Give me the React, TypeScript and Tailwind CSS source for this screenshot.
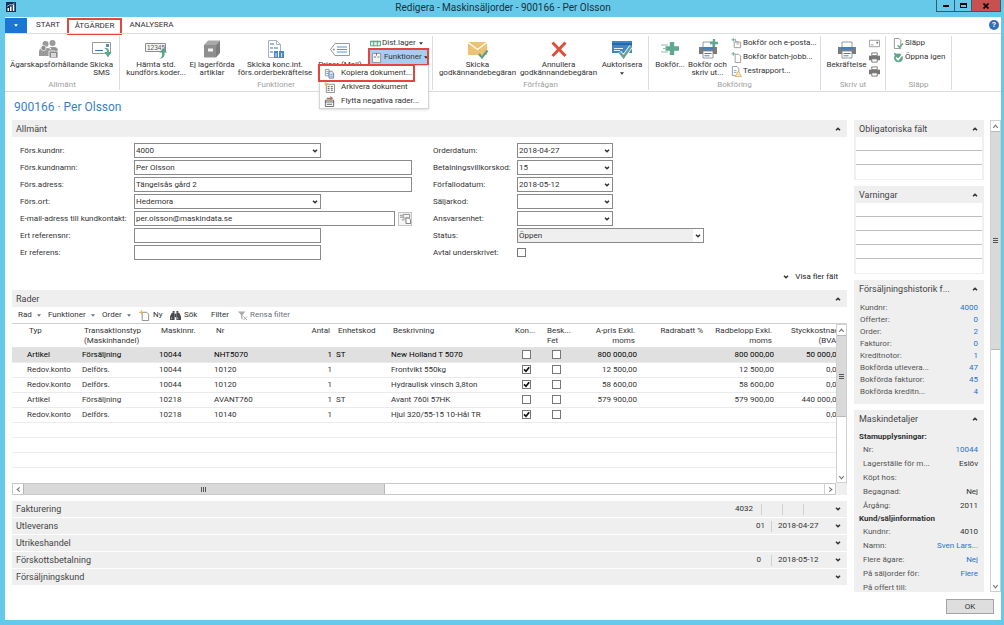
import type { ReactNode } from 'react'

const generalLeft = [
  { id: 'kundnr', label: 'Förs.kundnr:', value: '4000', kind: 'select' },
  { id: 'kundnamn', label: 'Förs.kundnamn:', value: 'Per Olsson', kind: 'wide' },
  { id: 'adress', label: 'Förs.adress:', value: 'Tängelsås gård 2', kind: 'wide' },
  { id: 'ort', label: 'Förs.ort:', value: 'Hedemora', kind: 'select' },
  { id: 'email', label: 'E-mail-adress till kundkontakt:', value: 'per.olsson@maskindata.se', kind: 'email' },
  { id: 'ertref', label: 'Ert referensnr:', value: '', kind: 'text' },
  { id: 'erref', label: 'Er referens:', value: '', kind: 'text' },
]

const generalRight = [
  { id: 'orderdatum', label: 'Orderdatum:', value: '2018-04-27' },
  { id: 'villkor', label: 'Betalningsvillkorskod:', value: '15' },
  { id: 'forfallo', label: 'Förfallodatum:', value: '2018-05-12' },
  { id: 'saljarkod', label: 'Säljarkod:', value: '' },
  { id: 'ansvar', label: 'Ansvarsenhet:', value: '' },
]

const lines = [
  { typ: 'Artikel', trans: 'Försäljning', maskin: '10044', nr: 'NHT5070', enhet: 'ST', text: 'New Holland T 5070', kon: false, pris: '800 000,00', cost: '50 000,00' },
  { typ: 'Redov.konto', trans: 'Delförs.', maskin: '10044', nr: '10120', enhet: '', text: 'Frontvikt 550kg', kon: true, pris: '12 500,00', cost: '0,00' },
  { typ: 'Redov.konto', trans: 'Delförs.', maskin: '10044', nr: '10120', enhet: '', text: 'Hydraulisk vinsch 3,8ton', kon: true, pris: '58 600,00', cost: '0,00' },
  { typ: 'Artikel', trans: 'Försäljning', maskin: '10218', nr: 'AVANT760', enhet: 'ST', text: 'Avant 760i 57HK', kon: false, pris: '579 900,00', cost: '440 000,00' },
  { typ: 'Redov.konto', trans: 'Delförs.', maskin: '10218', nr: '10140', enhet: '', text: 'Hjul 320/55-15 10-Hål TR', kon: true, pris: '', cost: '0,00' },
]

const history = [
  ['Kundnr:', '4000'],
  ['Offerter:', '0'],
  ['Order:', '2'],
  ['Fakturor:', '0'],
  ['Kreditnotor:', '1'],
  ['Bokförda utlevera...', '47'],
  ['Bokförda fakturor:', '45'],
  ['Bokförda kreditn...', '4'],
]

const masterData = [
  { label: 'Nr:', value: '10044', link: true },
  { label: 'Lagerställe för m...', value: 'Eslöv', link: false },
  { label: 'Köpt hos:', value: '', link: false },
  { label: 'Begagnad:', value: 'Nej', link: false },
  { label: 'Årgång:', value: '2011', link: false },
]

const customerData = [
  { label: 'Kundnr:', value: '4010', link: false },
  { label: 'Namn:', value: 'Sven Lars...', link: true },
  { label: 'Flere ägare:', value: 'Nej', link: true },
  { label: 'På säljorder för:', value: 'Flere', link: true },
  { label: 'På offert till:', value: '', link: false },
]

/* ---------- icons ---------- */

function Chevron({ up = false, className = '' }: { up?: boolean; className?: string }) {
  return (
    <svg viewBox="0 0 8 6" className={`h-[6px] w-[8px] shrink-0 ${className}`} fill="none" stroke="#333" strokeWidth="1.5">
      <path d={up ? 'M2 4.300 4 2.300l2 2' : 'M2 1.700 4 3.700l2-2'} />
    </svg>
  )
}

function Caret({ className = '' }: { className?: string }) {
  return (
    <svg viewBox="0 0 6 4" className={`h-[3px] w-[4px] shrink-0 ${className}`} fill="currentColor">
      <path d="M0 0h6L3 4z" />
    </svg>
  )
}

function Big({ children }: { children: ReactNode }) {
  return <svg viewBox="0 0 22 20" className="h-5 w-[22px] shrink-0" fill="none">{children}</svg>
}

function Small({ children }: { children: ReactNode }) {
  return <svg viewBox="0 0 12 12" className="h-[11px] w-[11px] shrink-0" fill="none">{children}</svg>
}

const PeopleIcon = () => (
  <Big>
    <g fill="#9a9a9a">
      <circle cx="7.500" cy="5" r="3" />
      <circle cx="14.500" cy="4" r="3" />
      <path d="M1 17v-4q0-4 4-4h5q3 0 3 4v4z" />
      <path d="M11 8h5q4 0 4 4v3h-6v-3q0-3-3-4z" />
    </g>
    <circle cx="5.500" cy="9" r="2.600" fill="#8b8b8b" stroke="#fff" strokeWidth=".7" />
    <path d="M11 12h9v7h-9z" fill="#8b8b8b" stroke="#fff" strokeWidth=".8" />
    <path d="M13 12v-2h5v2" stroke="#8b8b8b" />
    <path d="M13 14h5v4h-5z" fill="#d7d7d7" />
  </Big>
)

const SmsIcon = () => (
  <Big>
    <path d="M1.500 3.500h18v11h-18z" fill="#fff" stroke="#9b9b9b" />
    <path d="M4 11.500h8" stroke="#3c78b8" />
    <path d="M15 5h3v3h-3z" fill="#5b87b5" />
    <path d="M13 9q5-1 5 4h2.500L17 18.500 13.500 13H16q0-3-3-4z" fill="#5fa58c" />
  </Big>
)

const CodesIcon = () => (
  <Big>
    <path d="M.5 4.500h20v8H.5z" fill="#f4f4f4" stroke="#8d8d8d" />
    <text x="2" y="11" fontSize="6.500" fill="#555" fontFamily="Liberation Sans, sans-serif">12345</text>
    <path d="M14 19.500q4-1 3-6h-2.500L18.500 9l3.500 4.500h-2.500q1 6-5.500 6z" fill="#56a184" />
  </Big>
)

const BoxIcon = () => (
  <Big>
    <path d="M3 6 7 1.500h12L15 6z" fill="#a8a8a8" />
    <path d="M15 6l4-4.500V14l-4 4.500z" fill="#7d7d7d" />
    <path d="M3 6h12v12.500H3z" fill="#8e8e8e" />
    <path d="M7 9.500h5v3H7z" fill="#f2f2f2" />
  </Big>
)

const ConfirmIcon = () => (
  <Big>
    <path d="M4.500 1.500h8l4 4v13h-12z" fill="#fff" stroke="#a5b3c0" />
    <path d="M12.500 1.500v4h4" stroke="#a5b3c0" />
    <path d="M6 4h4v2H6zM6 8h3v2H6zM10 8h4v2h-4zM6 12h3v2H6z" fill="#9db9d6" />
    <path d="M10 12h4v7h-4zM15 12h5v7h-5z" fill="#4b8ac0" />
    <path d="M12 14v4M17.500 14v4" stroke="#cfe1f2" />
  </Big>
)

const TagIcon = () => (
  <Big>
    <path d="M6 4.500h14.500v12H6l-4.500-6z" fill="#fff" stroke="#9a9a9a" />
    <path d="M8 8h10M8 10.500h10M8 13h10" stroke="#5d93c7" />
    <circle cx="4.800" cy="10.500" r="1" fill="#9a9a9a" />
  </Big>
)

const MailCheckIcon = () => (
  <Big>
    <path d="M1 3h19v13H1z" fill="#ecc374" />
    <path d="m1 3.500 9.500 7 9.500-7" stroke="#fff" strokeWidth="1.200" />
    <path d="m12 15 3 3.500 5.500-7" stroke="#5f9f86" strokeWidth="2.200" />
  </Big>
)

const CrossIcon = () => (
  <Big>
    <path d="M4.500 3.500 17.500 17M17.500 3.500 4.500 17" stroke="#e04b35" strokeWidth="2.800" />
  </Big>
)

const AuthorizeIcon = () => (
  <Big>
    <path d="M1 2h20v12H1z" fill="#3f86c6" />
    <path d="M1 5h20" stroke="#235e96" strokeWidth="1.500" />
    <path d="M3 9.500h9M3 11.500h6" stroke="#e4effa" />
    <path d="m8.500 13 4 5L20 7.500" stroke="#fff" strokeWidth="4" />
    <path d="m8.500 13 4 5L20 7.500" stroke="#6aa393" strokeWidth="2.600" />
  </Big>
)

const PostIcon = () => (
  <Big>
    <path d="M13 3v13M6.500 9.500h13.500" stroke="#5fa88d" strokeWidth="4.400" />
    <path d="M2 6h7M4 9.500h4M2 13h7" stroke="#8bbfac" />
  </Big>
)

function PrinterShape() {
  return (
    <>
      <path d="M6 3h10v6H6z" fill="#fff" stroke="#808080" strokeWidth=".8" />
      <path d="M2 8h18v7H2z" fill="#7b7b7b" />
      <path d="M5 8h12v2H5z" fill="#3d83c3" />
      <path d="M6 12h10v7H6z" fill="#fff" stroke="#808080" strokeWidth=".8" />
      <path d="M7.500 14.500h7M7.500 16.800h5" stroke="#3d83c3" />
    </>
  )
}

const PrintPostIcon = () => (
  <Big>
    <PrinterShape />
    <path d="M17 0v8M13 4h8" stroke="#5fa88d" strokeWidth="2.400" />
  </Big>
)

const PrinterIcon = () => <Big><PrinterShape /></Big>

const SmallPrinter = () => (
  <Small>
    <path d="M3 1h6v3H3z" fill="#fff" stroke="#777" />
    <path d="M0 4h12v5H0z" fill="#777" />
    <path d="M3 7.500h6v3.500H3z" fill="#fff" stroke="#777" />
  </Small>
)

const SmallMail = () => (
  <Small>
    <path d="M.5 2.500h11v7H.5z" fill="#fff" stroke="#9a9a9a" />
    <path d="M2 7.500h3" stroke="#999" />
    <path d="M8 4h2v2H8z" fill="#777" />
  </Small>
)

const MoneyIcon = () => (
  <Small>
    <path d="M.5 3.500h11v5H.5z" fill="#e2f1ea" stroke="#5c9f88" />
    <path d="M0 4h12M4 3v6M8 3v6" stroke="#5c9f88" />
  </Small>
)

const FormIcon = () => (
  <Small>
    <path d="M1.500 1.500h9v10h-9z" fill="#f5f5f5" stroke="#8c8c8c" />
    <path d="M6 1v3M3 5.500h2.500M7 5.500h2" stroke="#6b6b6b" />
  </Small>
)

const CopyIcon = () => (
  <Small>
    <path d="M1.500 1.500h4v7h-4z" fill="#fff" stroke="#8495a8" />
    <path d="M5.500 3.500h3l2 2v5.500h-5z" fill="#dfeaf6" stroke="#5b82ad" />
    <path d="M2.500 4h2M2.500 6h2M7 7h2.500M7 9h2.500" stroke="#5b82ad" strokeWidth=".8" />
  </Small>
)

const ArchiveIcon = () => (
  <Small>
    <path d="M2.500 2.500h9v9h-9z" fill="#f8f8f8" stroke="#8b8b8b" />
    <path d="M4 5h2M7.500 5h2M4 7h2M7.500 7h2M4 9h2M7.500 9h2" stroke="#555" />
    <path d="M2 0v4M0 2h4" stroke="#e9b24c" />
  </Small>
)

const MoveIcon = () => (
  <Small>
    <path d="M1.500 4.500h9v7h-9z" fill="#fff" stroke="#666" />
    <path d="M1 6.500h10M3 9h6" stroke="#555" />
    <path d="M3 2h4V0l3 2.500L7 5V3.500H3z" fill="#b36a59" />
  </Small>
)

const PostMailIcon = () => (
  <Small>
    <path d="M3.500 4.500h7v6h-7z" fill="#fff" stroke="#999" />
    <path d="M2.500 0v4M.5 2h4" stroke="#5fa88d" />
    <path d="M6 6.500h3M5 1v3h3" stroke="#999" />
  </Small>
)

const PostBatchIcon = () => (
  <Small>
    <path d="M4.500 2.500h4l2 2v7h-6z" fill="#fff" stroke="#999" />
    <path d="M2.500 0v4M.5 2h4" stroke="#5fa88d" />
  </Small>
)

const ReportIcon = () => (
  <Small>
    <path d="M1.500.5h5l2 2v8h-7z" fill="#fff" stroke="#8f9aa5" />
    <path d="M3 5h3M3 7h3" stroke="#8aa9c6" />
    <path d="m8 5.500 3.500 6h-7z" fill="#fae6bf" stroke="#dba850" strokeWidth=".8" />
  </Small>
)

const ReleaseIcon = () => (
  <Small>
    <path d="M1.500.5h5l2 2v9h-7z" fill="#fff" stroke="#8f8f8f" />
    <path d="m5 8 2 2 4-4" stroke="#5fa58c" strokeWidth="1.500" />
  </Small>
)

const ReopenIcon = () => (
  <Small>
    <circle cx="6" cy="6.500" r="4.800" fill="#5fa58c" />
    <path d="m3.500 6 2 2.500L10 3" stroke="#fff" strokeWidth="1.500" />
    <path d="M1 1l3 .5L2 4z" fill="#5b87b5" />
  </Small>
)

const NewIcon = () => (
  <Small>
    <path d="M3.500 2.500h5l2 2v7h-7z" fill="#fff" stroke="#888" />
    <path d="M2.500 0v4.500M0 2.500h5" stroke="#e8a64a" />
  </Small>
)

const BinocularsIcon = () => (
  <Small>
    <path d="M2 3h3v8H0V7zM7 3h3l2 4v4H7z" fill="#4a4a4a" />
    <path d="M3 1h2v2H3zM7 1h2v2H7zM5 4h2v4H5z" fill="#4a4a4a" />
    <path d="M1.500 8v2M8.500 8v2" stroke="#bbb" />
  </Small>
)

const ClearFilterIcon = () => (
  <Small>
    <path d="M1 1.500h8L6 5.500v5L4.500 9V5.500z" fill="#aaa" />
    <path d="m7 7 4 4M11 7l-4 4" stroke="#aaa" />
  </Small>
)

/* ---------- ribbon ---------- */

function BigButton({ icon, lines, width, caret = false }: { icon: ReactNode; lines: string[]; width: string; caret?: boolean }) {
  return (
    <button className={`flex shrink-0 flex-col items-center pt-[3px] whitespace-nowrap ${width}`}>
      {icon}
      <span className="mt-[2px] flex flex-col items-center leading-[8px]">
        {lines.map((line) => <span key={line}>{line}</span>)}
      </span>
      {caret && <Caret className="mt-[3px]" />}
    </button>
  )
}

function SmallButton({ icon, label, caret = false }: { icon: ReactNode; label?: string; caret?: boolean }) {
  return (
    <button className="flex h-[14px] items-center gap-[1px] whitespace-nowrap" aria-label={label ?? 'Skriv ut'}>
      {icon}
      {label}
      {caret && <Caret className="ml-[2px]" />}
    </button>
  )
}

function RibbonGroup({ label, width, children }: { label: string; width: string; children: ReactNode }) {
  return (
    <div className={`mt-[2px] mb-[1px] flex shrink-0 flex-col border-r border-[#dcdcdc] ${width}`}>
      <div className="flex min-h-0 flex-1">{children}</div>
      <div className="h-[10px] text-center leading-[10px] text-[#a0a0a0]">{label}</div>
    </div>
  )
}

function FunctionsMenu() {
  const items = [
    { icon: <CopyIcon />, label: 'Kopiera dokument...', marked: true },
    { icon: <ArchiveIcon />, label: 'Arkivera dokument', marked: false },
    { icon: <MoveIcon />, label: 'Flytta negativa rader...', marked: false },
  ]
  return (
    <div className="absolute top-[15px] right-[-2px] z-10 w-[110px] border border-[#d5d5d5] bg-white shadow-sm">
      {items.map((item) => (
        <button
          key={item.label}
          className={`flex h-[14px] items-center gap-[6px] pl-[4px] whitespace-nowrap ${item.marked ? 'w-[93px] outline-2 outline-[#e2463f]' : 'w-full'}`}
        >
          {item.icon}
          {item.label}
        </button>
      ))}
    </div>
  )
}

function Ribbon() {
  return (
    <div className="flex h-[59px] shrink-0 border-y border-[#dcdcdc]">
      <RibbonGroup label="Allmänt" width="w-[115px]">
        <BigButton icon={<PeopleIcon />} lines={['Ägarskapsförhållande']} width="ml-[4px] w-[80px]" />
        <BigButton icon={<SmsIcon />} lines={['Skicka', 'SMS']} width="w-[25px]" />
      </RibbonGroup>
      <RibbonGroup label="Funktioner" width="w-[313px]">
        <BigButton icon={<CodesIcon />} lines={['Hämta std.', 'kundförs.koder...']} width="ml-[4px] w-[64px]" />
        <BigButton icon={<BoxIcon />} lines={['Ej lagerförda', 'artiklar']} width="w-[48px]" />
        <BigButton icon={<ConfirmIcon />} lines={['Skicka konc.int.', 'förs.orderbekräftelse']} width="w-[78px]" />
        <BigButton icon={<TagIcon />} lines={['Priser (Mail)']} width="w-[52px]" />
        <div className="ml-[4px]">
          <SmallButton icon={<MoneyIcon />} label="Dist.lager" caret />
          <div className="relative">
            <button className="flex h-[14px] w-[57px] items-center gap-[2px] bg-[#a9cdf0] px-[1px] whitespace-nowrap outline-2 outline-[#e2463f]">
              <FormIcon />
              Funktioner
              <Caret />
            </button>
            <FunctionsMenu />
          </div>
        </div>
      </RibbonGroup>
      <RibbonGroup label="Förfrågan" width="w-[216px]">
        <BigButton icon={<MailCheckIcon />} lines={['Skicka', 'godkännandebegäran']} width="ml-[4px] w-[81px]" />
        <BigButton icon={<CrossIcon />} lines={['Annullera', 'godkännandebegäran']} width="w-[81px]" />
        <BigButton icon={<AuthorizeIcon />} lines={['Auktorisera']} width="w-[46px]" caret />
      </RibbonGroup>
      <RibbonGroup label="Bokföring" width="w-[172px]">
        <BigButton icon={<PostIcon />} lines={['Bokför...']} width="ml-[4px] w-[34px]" />
        <BigButton icon={<PrintPostIcon />} lines={['Bokför och', 'skriv ut...']} width="w-[41px]" />
        <div className="ml-[3px]">
          <SmallButton icon={<PostMailIcon />} label="Bokför och e-posta..." />
          <SmallButton icon={<PostBatchIcon />} label="Bokför batch-jobb..." />
          <SmallButton icon={<ReportIcon />} label="Testrapport..." />
        </div>
      </RibbonGroup>
      <RibbonGroup label="Skriv ut" width="w-[65px]">
        <BigButton icon={<PrinterIcon />} lines={['Bekräftelse']} width="ml-[4px] w-[43px]" />
        <div className="ml-[1px]">
          <SmallButton icon={<SmallMail />} />
          <SmallButton icon={<SmallPrinter />} />
          <SmallButton icon={<SmallPrinter />} />
        </div>
      </RibbonGroup>
      <RibbonGroup label="Släpp" width="w-[66px]">
        <div className="ml-[7px]">
          <SmallButton icon={<ReleaseIcon />} label="Släpp" />
          <SmallButton icon={<ReopenIcon />} label="Öppna igen" />
        </div>
      </RibbonGroup>
    </div>
  )
}

/* ---------- form parts ---------- */

function SelectBox({ id, value, width, muted = false }: { id: string; value: string; width: string; muted?: boolean }) {
  return (
    <div className={`relative ${width}`}>
      <select id={id} defaultValue={value} className={`block h-[15px] w-full appearance-none border border-[#8a8a8a] pl-[1px] leading-[12px] ${muted ? 'bg-[#efefef]' : 'bg-white'}`}>
        <option>{value}</option>
      </select>
      <div className="pointer-events-none absolute inset-y-[1px] right-[1px] flex w-[10px] items-center justify-center bg-white">
        <Chevron />
      </div>
    </div>
  )
}

function SectionHeader({ title }: { title: string }) {
  return (
    <button className="flex h-[17px] w-full shrink-0 items-center justify-between bg-[#efefef] pr-[5px] pl-[4px] text-[9px] text-[#444]">
      {title}
      <Chevron up />
    </button>
  )
}

function Check({ id, label, checked = false }: { id?: string; label: string; checked?: boolean }) {
  return (
    <span className="relative block h-[9px] w-[9px]">
      <input id={id} type="checkbox" aria-label={label} defaultChecked={checked} className="peer block h-[9px] w-[9px] appearance-none border border-[#777] bg-white" />
      <svg viewBox="0 0 9 9" className="pointer-events-none absolute inset-0 hidden h-[9px] w-[9px] peer-checked:block" fill="none" stroke="#111" strokeWidth="1.700">
        <path d="m2 4.300 2 2 3.200-4" />
      </svg>
    </span>
  )
}

function GeneralSection() {
  const input = 'h-[15px] border border-[#8a8a8a] bg-white pl-[1px]'
  return (
    <section className="shrink-0">
      <SectionHeader title="Allmänt" />
      <div className="flex pt-[6px] pl-[8px]">
        <div className="flex w-[413px] flex-col gap-[2px]">
          {generalLeft.map((field) => (
            <div key={field.id} className="flex items-center">
              <label htmlFor={field.id} className="w-[114px] shrink-0 whitespace-nowrap">{field.label}</label>
              {field.kind === 'select' && <SelectBox id={field.id} value={field.value} width="w-[187px]" />}
              {field.kind === 'wide' && <input id={field.id} defaultValue={field.value} className={`w-[278px] ${input}`} />}
              {field.kind === 'text' && <input id={field.id} defaultValue={field.value} className={`w-[187px] ${input}`} />}
              {field.kind === 'email' && (
                <>
                  <input id={field.id} defaultValue={field.value} className={`w-[261px] ${input}`} />
                  <button aria-label="Skicka e-post" className="ml-[3px] flex h-[14px] w-[14px] items-center justify-center border border-[#c4c4c4] bg-[#f6f6f6]">
                    <Small>
                      <path d="M3.500 1.500h7v4h-7z" stroke="#888" />
                      <path d="M6.500 5.500h3l2 2v4h-5z" fill="#fff" stroke="#777" />
                      <path d="M0 2.500h3M0 4.500h3M2 7.500h3" stroke="#888" />
                    </Small>
                  </button>
                </>
              )}
            </div>
          ))}
        </div>
        <div className="flex flex-col gap-[2px]">
          {generalRight.map((field) => (
            <div key={field.id} className="flex items-center">
              <label htmlFor={field.id} className="w-[84px] whitespace-nowrap">{field.label}</label>
              <SelectBox id={field.id} value={field.value} width="w-[96px]" />
            </div>
          ))}
          <div className="flex items-center">
            <label htmlFor="status" className="w-[84px]">Status:</label>
            <SelectBox id="status" value="Öppen" width="w-[187px]" muted />
          </div>
          <div className="flex h-[15px] items-center">
            <label htmlFor="avtal" className="w-[84px] whitespace-nowrap">Avtal underskrivet:</label>
            <Check id="avtal" label="Avtal underskrivet" />
          </div>
        </div>
      </div>
      <div className="flex h-[30px] items-end justify-end pr-[9px] pb-[8px]">
        <button className="flex h-[10px] items-center gap-[5px] text-[#222]">
          <Chevron />
          Visa fler fält
        </button>
      </div>
    </section>
  )
}

/* ---------- order lines ---------- */

function LinesToolbar() {
  return (
    <div className="flex h-[16px] shrink-0 items-center pl-[6px] whitespace-nowrap">
      <button className="flex w-[30px] items-center gap-[5px]">Rad <Caret className="text-gray-500" /></button>
      <button className="flex w-[54px] items-center gap-[5px]">Funktioner <Caret className="text-gray-500" /></button>
      <button className="flex w-[37px] items-center gap-[5px]">Order <Caret className="text-gray-500" /></button>
      <button className="flex w-[31px] items-center gap-[3px]"><NewIcon /> Ny</button>
      <button className="flex w-[41px] items-center gap-[3px]"><BinocularsIcon /> Sök</button>
      <button className="w-[26px] text-left">Filter</button>
      <button className="flex items-center gap-[2px] text-gray-500"><ClearFilterIcon /> Rensa filter</button>
    </div>
  )
}

function ScrollButton({ path, className }: { path: string; className: string }) {
  return (
    <button aria-label="Rulla" className={`flex shrink-0 items-center justify-center bg-white ${className}`}>
      <svg viewBox="0 0 8 8" className="h-[7px] w-[7px]" fill="none" stroke="#777" strokeWidth="1.300"><path d={path} /></svg>
    </button>
  )
}

function VerticalScrollbar({ thumb }: { thumb: string }) {
  return (
    <div className="flex w-[11px] shrink-0 flex-col border border-[#d0d0d0] bg-white">
      <ScrollButton path="m1.500 5.500 2.500-3 2.500 3" className="h-[10px] w-full" />
      <div className={`flex flex-col items-center justify-center gap-[1px] border-y border-[#b8b8b8] bg-[#d9d9d9] ${thumb}`}>
        <span className="h-px w-[5px] bg-[#555]" />
        <span className="h-px w-[5px] bg-[#555]" />
        <span className="h-px w-[5px] bg-[#555]" />
      </div>
      <div className="flex-1" />
      <ScrollButton path="m1.500 2.500 2.500 3 2.500-3" className="h-[10px] w-full" />
    </div>
  )
}

function LinesTable() {
  const th = 'px-[4px] pt-[2px] align-top font-normal'
  return (
    <div className="shrink-0">
      <div className="flex border-t border-[#cfcfcf]">
        <div className="min-w-0 flex-1 overflow-hidden">
          <table className="w-[calc(100%+7px)] table-fixed border-collapse whitespace-nowrap">
            <colgroup>
              <col className="w-[13px]" />
              <col className="w-[55px]" />
              <col className="w-[77px]" />
              <col className="w-[55px]" />
              <col className="w-[68px]" />
              <col className="w-[54px]" />
              <col className="w-[55px]" />
              <col />
              <col className="w-[32px]" />
              <col className="w-[29px]" />
              <col className="w-[67px]" />
              <col className="w-[68px]" />
              <col className="w-[69px]" />
              <col className="w-[67px]" />
            </colgroup>
            <thead>
              <tr className="h-[23px] border-b border-[#e4e4e4] text-left leading-[10px]">
                <th />
                <th className={th}>Typ</th>
                <th className={th}>Transaktionstyp<br />(Maskinhandel)</th>
                <th className={th}>Maskinnr.</th>
                <th className={th}>Nr</th>
                <th className={`${th} text-right`}>Antal</th>
                <th className={th}>Enhetskod</th>
                <th className={th}>Beskrivning</th>
                <th className={th}>Kon...</th>
                <th className={th}>Besk...<br />Fet</th>
                <th className={`${th} text-right`}>A-pris Exkl.<br />moms</th>
                <th className={`${th} text-right`}>Radrabatt %</th>
                <th className={`${th} text-right`}>Radbelopp Exkl.<br />moms</th>
                <th className={`${th} text-right`}>Styckkostnad<br />(BVA)</th>
              </tr>
            </thead>
            <tbody>
              {lines.map((line, i) => (
                <tr key={i} className={`h-[15px] border-b border-[#ebebeb] ${i === 0 ? 'bg-[#e0e0e0] text-black' : ''}`}>
                  <td />
                  <td className="px-[2px]">{line.typ}</td>
                  <td className="px-[2px]">{line.trans}</td>
                  <td className="px-[2px]">{line.maskin}</td>
                  <td className="px-[2px]">{line.nr}</td>
                  <td className="px-[2px] text-right">1</td>
                  <td className="px-[2px]">{line.enhet}</td>
                  <td className="px-[2px]">{line.text}</td>
                  <td className="pl-[11px]"><Check label="Kontroll" checked={line.kon} /></td>
                  <td className="pl-[9px]"><Check label="Beskrivning fet" /></td>
                  <td className="px-[2px] text-right">{line.pris}</td>
                  <td />
                  <td className="px-[2px] text-right">{line.pris}</td>
                  <td className="px-[2px] text-right">{line.cost}</td>
                </tr>
              ))}
              {[0, 1, 2].map((i) => (
                <tr key={i} className="h-[15px] border-b border-[#ebebeb]"><td colSpan={14} /></tr>
              ))}
              <tr className="h-[16px]"><td colSpan={14} /></tr>
            </tbody>
          </table>
        </div>
        <VerticalScrollbar thumb="h-[82px]" />
      </div>
      <div className="flex h-[12px] bg-[#efefef] pr-[11px]">
        <div className="flex flex-1 border border-[#c8c8c8] bg-white">
          <ScrollButton path="M5.500 1.500 2.500 4l3 2.500" className="h-full w-[10px]" />
          <div className="flex w-[44%] items-center justify-center gap-[1px] border-x border-[#b8b8b8] bg-[#d9d9d9]">
            <span className="h-[5px] w-px bg-[#555]" />
            <span className="h-[5px] w-px bg-[#555]" />
            <span className="h-[5px] w-px bg-[#555]" />
          </div>
          <div className="flex-1" />
          <ScrollButton path="M2.500 1.500 5.500 4l-3 2.500" className="h-full w-[11px] border-l border-[#d0d0d0]" />
        </div>
      </div>
    </div>
  )
}

function CollapsedSection({ title, children }: { title: string; children?: ReactNode }) {
  return (
    <button className="flex h-[16px] w-full items-center bg-[#efefef] pr-[5px] pl-[4px]">
      <span className="text-[9px] text-[#444]">{title}</span>
      <span className="ml-auto flex items-center">{children}</span>
      <Chevron />
    </button>
  )
}

function CollapsedSections() {
  const divider = 'h-[11px] w-px bg-[#cfcfcf]'
  return (
    <div className="mt-[6px] flex shrink-0 flex-col gap-[1px]">
      <CollapsedSection title="Fakturering">
        4032
        <span className={`ml-[8px] ${divider}`} />
        <span className={`ml-[20px] ${divider}`} />
        <span className={`mr-[30px] ml-[20px] ${divider}`} />
      </CollapsedSection>
      <CollapsedSection title="Utleverans">
        01
        <span className={`mx-[6px] ${divider}`} />
        <span className="w-[56px] text-left">2018-04-27</span>
      </CollapsedSection>
      <CollapsedSection title="Utrikeshandel" />
      <CollapsedSection title="Förskottsbetalning">
        0
        <span className={`mr-[6px] ml-[10px] ${divider}`} />
        <span className="w-[56px] text-left">2018-05-12</span>
      </CollapsedSection>
      <CollapsedSection title="Försäljningskund" />
    </div>
  )
}

/* ---------- fact boxes ---------- */

function FactBox({ title, children }: { title: string; children: ReactNode }) {
  return (
    <section className="shrink-0 bg-[#efefef]">
      <button className="flex h-[17px] w-full items-center justify-between pr-[5px] pl-[5px] text-[9px] whitespace-nowrap text-[#444]">
        {title}
        <Chevron up />
      </button>
      {children}
    </section>
  )
}

function EmptyRows({ count }: { count: number }) {
  return (
    <div className="mx-[2px] divide-y divide-[#bdbdbd] bg-white">
      {Array.from({ length: count }, (_, i) => <div key={i} className="h-[14px]" />)}
    </div>
  )
}

function Details({ rows }: { rows: { label: string; value: string; link: boolean }[] }) {
  return (
    <dl>
      {rows.map((row) => (
        <div key={row.label} className="flex h-[14px] items-center justify-between pr-[6px] pl-[9px] whitespace-nowrap">
          <dt className="text-[#555]">{row.label}</dt>
          <dd>{row.link ? <a href="#" className="text-[#2a74c9]">{row.value}</a> : row.value}</dd>
        </div>
      ))}
    </dl>
  )
}

function Sidebar() {
  return (
    <aside className="flex w-[130px] shrink-0 flex-col gap-[6px] overflow-hidden">
      <FactBox title="Obligatoriska fält">
        <div className="pb-[1px]"><EmptyRows count={3} /></div>
      </FactBox>
      <FactBox title="Varningar">
        <div className="pb-[1px]"><EmptyRows count={5} /></div>
      </FactBox>
      <FactBox title="Försäljningshistorik f...">
        <dl className="pt-[5px] pb-[6px]">
          {history.map(([label, value]) => (
            <div key={label} className="flex h-[12px] items-center justify-between pr-[6px] pl-[6px] whitespace-nowrap">
              <dt className="text-[#555]">{label}</dt>
              <dd><a href="#" className="text-[#2a74c9]">{value}</a></dd>
            </div>
          ))}
        </dl>
      </FactBox>
      <FactBox title="Maskindetaljer">
        <h3 className="mt-[4px] pl-[5px] leading-[12px] font-bold">Stamupplysningar:</h3>
        <Details rows={masterData} />
        <h3 className="pl-[5px] leading-[12px] font-bold">Kund/säljinformation</h3>
        <Details rows={customerData} />
      </FactBox>
    </aside>
  )
}

/* ---------- window ---------- */

function TitleBar() {
  return (
    <header className="relative flex h-[17px] shrink-0 items-start justify-between">
      <svg viewBox="0 0 10 10" className="mt-[2px] ml-[1px] h-[10px] w-[10px]">
        <path d="M0 0h10v10H0z" fill="#12305c" />
        <path d="M1.500 6h1.500v3H1.500zM4 4.500h1.500V9H4zM6.800 2.500h1.500V9H6.800z" fill="#fff" />
        <path d="m1 4.500 3-2 2 .5 2.500-2" fill="none" stroke="#dfe8f5" strokeWidth=".7" />
      </svg>
      <h1 className="absolute inset-x-0 text-center text-[10px] leading-[16px] text-[#16333f]">Redigera - Maskinsäljorder - 900166 - Per Olsson</h1>
      <div className="relative flex h-[12px] border border-t-0 border-[#2e5e70]">
        <button aria-label="Minimera" className="flex w-[18px] items-center justify-center border-r border-[#2e5e70]"><span className="h-[2px] w-[6px] bg-black" /></button>
        <button aria-label="Maximera" className="flex w-[17px] items-center justify-center border-r border-[#2e5e70]"><span className="h-[5px] w-[7px] border border-t-2 border-black" /></button>
        <button aria-label="Stäng" className="flex w-[28px] items-center justify-center bg-[#c8504f]">
          <svg viewBox="0 0 6 6" className="h-[6px] w-[6px]" stroke="#000" strokeWidth="1.600"><path d="m.5.500 5 5M5.500.500l-5 5" /></svg>
        </button>
      </div>
    </header>
  )
}

function Tabs() {
  return (
    <nav className="flex h-[16px] shrink-0 items-center">
      <button aria-label="Arkiv" className="mt-[1px] flex h-[15px] w-[22px] items-center justify-center bg-[#1a76d2] text-white"><Caret /></button>
      <button className="w-[42px]">START</button>
      <button className="mt-[2px] h-[13px] w-[51px] leading-[12px] outline-2 outline-[#e2463f]">ÅTGÄRDER</button>
      <button className="w-[63px]">ANALYSERA</button>
      <button aria-label="Hjälp" className="mr-[2px] ml-auto flex h-[10px] w-[10px] items-center justify-center rounded-full bg-[#2f6fba] font-bold text-white">?</button>
    </nav>
  )
}

export default function App() {
  return (
    <div className="flex h-screen flex-col bg-[#66c9ea] pr-[3px] pb-[5px] pl-[5px] font-['Roboto','Noto_Sans',sans-serif] text-[8px] leading-[12px] text-[#333]">
      <TitleBar />
      <div className="flex min-h-0 flex-1 flex-col bg-white">
        <Tabs />
        <Ribbon />
        <h2 className="h-[28px] shrink-0 pl-[9px] text-[12px] leading-[30px] text-[#3a7fc4]">900166 · Per Olsson</h2>
        <main className="flex min-h-0 flex-1 pl-[7px]">
          <div className="flex min-w-0 flex-1 flex-col">
            <GeneralSection />
            <SectionHeader title="Rader" />
            <LinesToolbar />
            <LinesTable />
            <CollapsedSections />
          </div>
          <div className="ml-[7px] flex">
            <Sidebar />
          </div>
          <div className="ml-[6px] flex">
            <VerticalScrollbar thumb="h-[219px]" />
          </div>
        </main>
        <footer className="flex h-[28px] shrink-0 items-start justify-end pt-[7px] pr-[7px]">
          <button className="h-[15px] w-[48px] border border-[#a3a3a3] bg-[#dedede] leading-[12px]">OK</button>
        </footer>
      </div>
    </div>
  )
}
